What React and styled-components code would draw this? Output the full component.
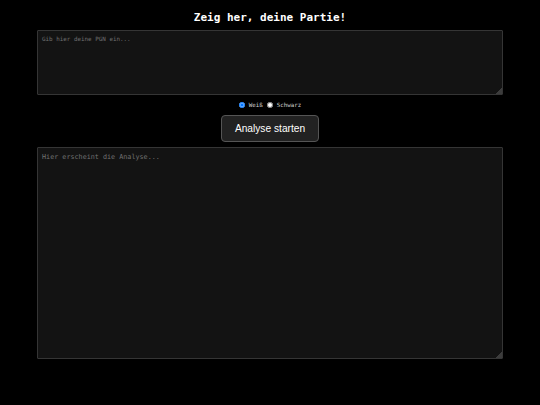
import React, { useState } from "react";
import styled, { createGlobalStyle } from "styled-components";

const GlobalStyle = createGlobalStyle`
  html, body {
    margin: 0;
    padding: 0;
    background: #000;
    color-scheme: dark;
  }
  body {
    font-family: "DejaVu Sans Mono", monospace;
    color: #fff;
  }
`;

const Page = styled.div`
  display: flex;
  flex-direction: column;
  align-items: center;
  width: 540px;
  min-height: 405px;
  padding-top: 11px;
  box-sizing: border-box;
`;

const Title = styled.h1`
  margin: 0 0 6px;
  font-family: "DejaVu Sans Mono", monospace;
  font-size: 11px;
  line-height: 13px;
  font-weight: bold;
  color: #fff;
`;

const TextArea = styled.textarea`
  box-sizing: border-box;
  width: 466px;
  height: ${(p) => p.$height}px;
  margin: 0;
  padding: 5px 4px;
  background: #131313;
  border: 1px solid #353535;
  border-radius: 1px;
  color: #ddd;
  font-family: "DejaVu Sans Mono", monospace;
  font-size: ${(p) => p.$fontSize}px;
  resize: vertical;
  outline: none;

  &::placeholder {
    color: #707070;
  }

  &::-webkit-resizer {
    background: linear-gradient(135deg, transparent 78%, #3c3c3c 78%);
  }
`;

const RadioRow = styled.div`
  display: flex;
  align-items: center;
  gap: 4px;
  margin-top: 6px;
  height: 8px;
`;

const RadioLabel = styled.label`
  display: flex;
  align-items: center;
  gap: 4px;
  font-size: 5.8px;
  font-weight: normal;
  color: #d0d0d0;
`;

const Radio = styled.input`
  width: 6px;
  height: 6px;
  margin: 0;
  color-scheme: light;
`;

const Button = styled.button`
  margin-top: 6px;
  margin-bottom: 5px;
  height: 27px;
  padding: 0 13px;
  background: #222;
  border: 1px solid #555;
  border-radius: 4px;
  color: #fff;
  font-family: "Liberation Sans", Arial, sans-serif;
  font-size: 10.2px;
  cursor: pointer;
`;

export default function App() {
  const [color, setColor] = useState("white");

  return (
    <>
      <GlobalStyle />
      <Page>
        <Title>Zeig her, deine Partie!</Title>
        <TextArea $height={65} $fontSize={5.9} placeholder="Gib hier deine PGN ein..." />
        <RadioRow>
          <RadioLabel>
            <Radio
              type="radio"
              name="color"
              checked={color === "white"}
              onChange={() => setColor("white")}
            />
            Weiß
          </RadioLabel>
          <RadioLabel>
            <Radio
              type="radio"
              name="color"
              checked={color === "black"}
              onChange={() => setColor("black")}
            />
            Schwarz
          </RadioLabel>
        </RadioRow>
        <Button>Analyse starten</Button>
        <TextArea $height={212} $fontSize={6.75} placeholder="Hier erscheint die Analyse..." readOnly />
      </Page>
    </>
  );
}
